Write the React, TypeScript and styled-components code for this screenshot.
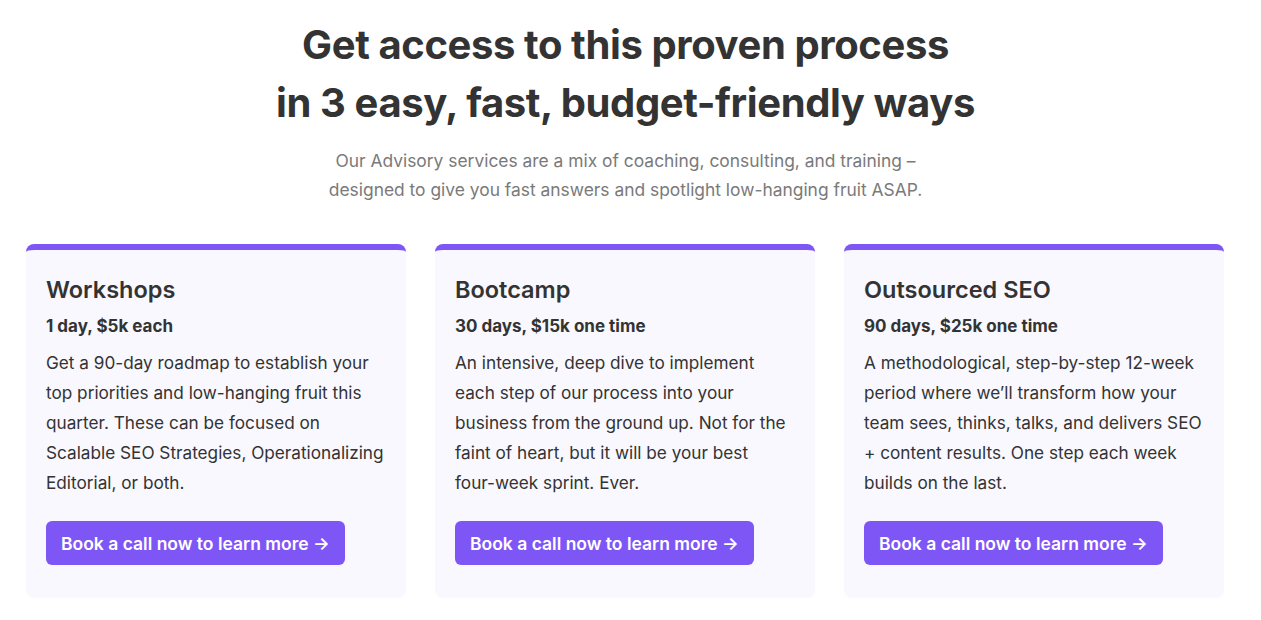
import React from 'react';
import styled, { createGlobalStyle } from 'styled-components';

const GlobalStyle = createGlobalStyle`
  body {
    margin: 0;
    background: #ffffff;
    font-family: Inter, "Noto Sans", sans-serif;
    color: #333333;
  }
`;

const Section = styled.section`
  padding: 16px 0 0 26px;
  width: 1199px;
`;

const Heading = styled.h2`
  margin: 0;
  text-align: center;
  font-size: 40px;
  line-height: 58px;
  font-weight: 700;
  letter-spacing: -0.4px;
  color: #333333;
`;

const Lead = styled.p`
  margin: 14px auto 0;
  text-align: center;
  font-size: 17.4px;
  line-height: 29px;
  color: #7a7a7a;
`;

const Cards = styled.div`
  margin-top: 40px;
  display: grid;
  grid-template-columns: repeat(3, 380px);
  gap: 29px;
`;

const Card = styled.article`
  background: #f8f8fe;
  border-top: 6px solid #7f56f6;
  border-radius: 8px;
  padding: 24px 14px 33px 20px;
  display: flex;
  flex-direction: column;
`;

const CardTitle = styled.h3`
  margin: 0;
  font-size: 23.5px;
  line-height: 32px;
  font-weight: 600;
  color: #333333;
`;

const Price = styled.div`
  margin-top: 7px;
  font-size: 17px;
  line-height: 26px;
  font-weight: 700;
  color: #333333;
`;

const Body = styled.p`
  margin: 9px 0 0;
  font-size: 17.2px;
  line-height: 30px;
  color: #333333;
  flex: 1;
`;

const Line = styled.span`
  display: block;
  white-space: nowrap;
`;

const Button = styled.a`
  margin-top: 23px;
  align-self: flex-start;
  display: inline-flex;
  align-items: center;
  height: 44px;
  padding: 0 15px;
  border-radius: 6px;
  background: #7f56f6;
  color: #ffffff;
  font-size: 17.5px;
  font-weight: 600;
  text-decoration: none;
`;

const plans = [
  {
    title: 'Workshops',
    price: '1 day, $5k each',
    lines: [
      'Get a 90-day roadmap to establish your',
      'top priorities and low-hanging fruit this',
      'quarter. These can be focused on',
      'Scalable SEO Strategies, Operationalizing',
      'Editorial, or both.',
    ],
  },
  {
    title: 'Bootcamp',
    price: '30 days, $15k one time',
    lines: [
      'An intensive, deep dive to implement',
      'each step of our process into your',
      'business from the ground up. Not for the',
      'faint of heart, but it will be your best',
      'four-week sprint. Ever.',
    ],
  },
  {
    title: 'Outsourced SEO',
    price: '90 days, $25k one time',
    lines: [
      'A methodological, step-by-step 12-week',
      'period where we\u2019ll transform how your',
      'team sees, thinks, talks, and delivers SEO',
      '+ content results. One step each week',
      'builds on the last.',
    ],
  },
];

const App: React.FunctionComponent = () => {
  return (
    <>
      <GlobalStyle />
      <Section>
        <Heading>
          Get access to this proven process
          <br />
          in 3 easy, fast, budget-friendly ways
        </Heading>
        <Lead>
          Our Advisory services are a mix of coaching, consulting, and training &ndash;
          <br />
          designed to give you fast answers and spotlight low-hanging fruit ASAP.
        </Lead>
        <Cards>
          {plans.map((p) => (
            <Card key={p.title}>
              <CardTitle>{p.title}</CardTitle>
              <Price>{p.price}</Price>
              <Body>
                {p.lines.map((l) => (
                  <Line key={l}>{l}</Line>
                ))}
              </Body>
              <Button href="#">Book a call now to learn more &rarr;</Button>
            </Card>
          ))}
        </Cards>
      </Section>
    </>
  );
};

export default App;
